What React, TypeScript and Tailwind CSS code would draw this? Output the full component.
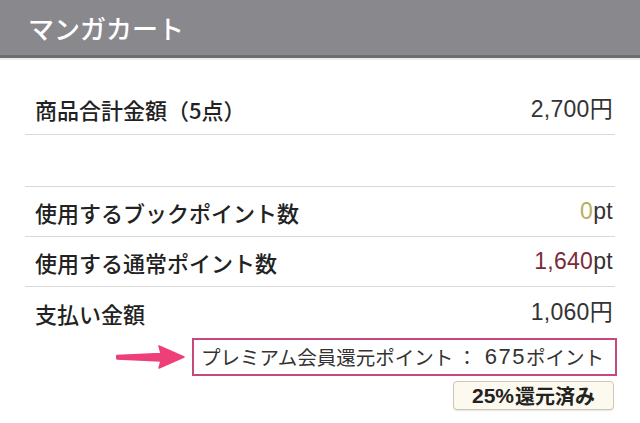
import React from "react";

function Row({ label, children, border = true, h = "h-[50px]" }: { label: string; children?: React.ReactNode; border?: boolean; h?: string }) {
  return (
    <div className={`flex items-center justify-between pl-[10px] pr-[2px] ${h} ${border ? "border-b border-[#d9d9d9]" : ""} box-content`}>
      <span className="text-[22px] font-medium text-[#222] leading-none">{label}</span>
      <span className="text-[23px] text-[#333] leading-none font-['Liberation_Sans','Noto_Sans_CJK_JP',sans-serif] tracking-[0.3px]">{children}</span>
    </div>
  );
}

export default function App() {
  return (
    <div className="w-[640px] h-[423px] bg-white overflow-hidden font-['Noto_Sans_CJK_JP',sans-serif]">
      <div className="h-[58px] bg-[#89888d] border-b-[3px] border-[#6d6c71] flex items-center px-[28px]">
        <span className="text-white text-[26px] font-medium leading-none">マンガカート</span>
      </div>
      <div className="h-[2px] bg-[#ececec]" />
      <div className="px-[25px] pt-[24px]">
        <Row label="商品合計金額（5点）">2,700円</Row>
        <div className="h-[51px] border-b border-[#d9d9d9] box-content" />
        <Row label="使用するブックポイント数" h="h-[49px]">
          <span className="text-[#b9ad5a]">0</span>pt
        </Row>
        <Row label="使用する通常ポイント数" h="h-[49px]">
          <span className="text-[#7b2b3b]">1,640</span>pt
        </Row>
        <Row label="支払い金額" border={false} h="h-[51px]">1,060円</Row>
        <div className="flex items-center justify-end mr-[-2px]">
          <svg width="70" height="26" viewBox="0 0 70 26" className="mr-[6px]">
            <path d="M1 11.5 L45 9.5 L43 2 L68 13 L43 24 L45 17 L1 15 Q0 13.2 1 11.5 Z" fill="#ee3f79" strokeLinejoin="round" stroke="#ee3f79" strokeWidth="1.5" />
          </svg>
          <div className="w-[425px] h-[38px] border-2 border-[#c5497c] flex items-center pl-[7px] text-[19.5px] text-[#333] leading-none whitespace-nowrap">
            プレミアム会員還元ポイント<span className="pl-[4px] pr-[8px]">：</span>
            <span className="font-['Liberation_Sans',sans-serif] text-[22px] tracking-[1.5px]">675</span>ポイント
          </div>
        </div>
        <div className="flex justify-end mt-[5px] mr-[1px]">
          <div className="w-[161px] h-[29px] bg-[#fcf9ee] border border-[#cfc7b5] rounded-[4px] flex items-center justify-center text-[20px] font-bold text-[#222] leading-none shadow-[0_1px_1px_rgba(0,0,0,0.1)]">
            <span className="font-['Liberation_Sans',sans-serif] text-[21px] mr-[1px]">25%</span>還元済み
          </div>
        </div>
      </div>
    </div>
  );
}
